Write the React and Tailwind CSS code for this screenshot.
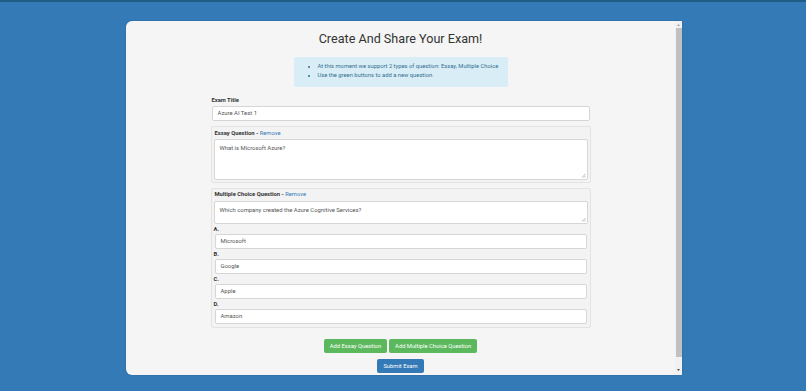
import React from "react";

const font = { fontFamily: "Roboto, 'Noto Sans', sans-serif" };

function Input({ value }) {
  return (
    <div className="mx-[1px] h-[15px] bg-white border border-[#d6d6d6] rounded-[2px] flex items-center px-[5px] text-[5.9px] text-[#555]">
      {value}
    </div>
  );
}

function TextArea({ value, h }) {
  return (
    <div className={`relative bg-white border border-[#d6d6d6] rounded-[2px] px-[5px] pt-[4px] text-[5.9px] text-[#555] ${h}`}>
      {value}
      <svg className="absolute right-[1px] bottom-[1px]" width="5" height="5" viewBox="0 0 5 5">
        <path d="M4.5 1 L1 4.5 M4.5 3 L3 4.5" stroke="#999" strokeWidth="0.7" />
      </svg>
    </div>
  );
}

function Option({ letter, value }) {
  return (
    <div className="flex flex-col">
      <div className="h-[10px] leading-[10px] font-bold text-[5.8px] text-[#333]">{letter}</div>
      <Input value={value} />
    </div>
  );
}

export default function App() {
  return (
    <div style={font} className="h-[391px] w-[806px] bg-[#337ab7] border-t-2 border-[#1f5c86] overflow-hidden">
      <div className="ml-[126px] mt-[19px] w-[556px] h-[354px] bg-[#f5f5f5] rounded-l-[6px] flex shadow-[0_0_2px_rgba(0,0,0,0.2)]">
        <div className="flex-1 flex flex-col items-center pt-[8px]">
          <h1 className="text-[12.6px] leading-[20px] text-[#333]">Create And Share Your Exam!</h1>
          <div className="mt-[8px] w-[214px] bg-[#d9edf7] rounded-[2px] pt-[5px] pb-[7px] text-[#31708f] text-[5.8px] leading-[9px]">
            <ul className="list-disc pl-[24px]">
              <li>At this moment we support 2 types of question: Essay, Multiple Choice</li>
              <li>Use the green buttons to add a new question.</li>
            </ul>
          </div>
          <div className="w-[380px] mt-[9px] flex flex-col">
            <div className="h-[8px] leading-[8px] font-bold text-[5.8px] text-[#333] ml-[1px] mb-[2px]">Exam Title</div>
            <Input value="Azure AI Test 1" />
            <div className="mt-[5px] border border-[#e3e3e3] bg-[#f3f3f3] rounded-[2px] px-[2px] pt-[2px] pb-[2px]">
              <div className="h-[8px] leading-[8px] font-bold text-[5.8px] text-[#333] ml-[1px] mb-[2px]">
                Essay Question - <span className="font-normal text-[#337ab7]">Remove</span>
              </div>
              <TextArea value="What is Microsoft Azure?" h="h-[41px]" />
            </div>
            <div className="mt-[5px] border border-[#e3e3e3] bg-[#f3f3f3] rounded-[2px] px-[2px] pt-[1px] pb-[3px]">
              <div className="h-[8px] leading-[8px] font-bold text-[5.8px] text-[#333] ml-[1px] mb-[3px]">
                Multiple Choice Question - <span className="font-normal text-[#337ab7]">Remove</span>
              </div>
              <TextArea value="Which company created the Azure Cognitive Services?" h="h-[23px]" />
              <Option letter="A." value="Microsoft" />
              <Option letter="B." value="Google" />
              <Option letter="C." value="Apple" />
              <Option letter="D." value="Amazon" />
            </div>
          </div>
          <div className="mt-[11px] flex gap-[2px]">
            <button className="h-[14px] px-[6px] bg-[#5cb85c] text-white text-[5.8px] rounded-[2px]">Add Essay Question</button>
            <button className="h-[14px] px-[6px] bg-[#5cb85c] text-white text-[5.8px] rounded-[2px]">Add Multiple Choice Question</button>
          </div>
          <button className="mt-[6px] h-[14px] px-[6px] bg-[#337ab7] text-white text-[5.8px] rounded-[2px]">Submit Exam</button>
        </div>
        <div className="w-[7px] bg-[#f1f1f1] flex flex-col items-center">
          <svg className="mt-[2px]" width="5" height="4" viewBox="0 0 5 4"><path d="M2.5 1 L4 3 L1 3 Z" fill="#a3a3a3" /></svg>
          <div className="mt-[1px] w-[6px] h-[329px] bg-[#c1c1c1]" />
          <div className="flex-1" />
          <svg className="mb-[3px]" width="5" height="4" viewBox="0 0 5 4"><path d="M1 1 L4 1 L2.5 3 Z" fill="#505050" /></svg>
        </div>
      </div>
    </div>
  );
}
